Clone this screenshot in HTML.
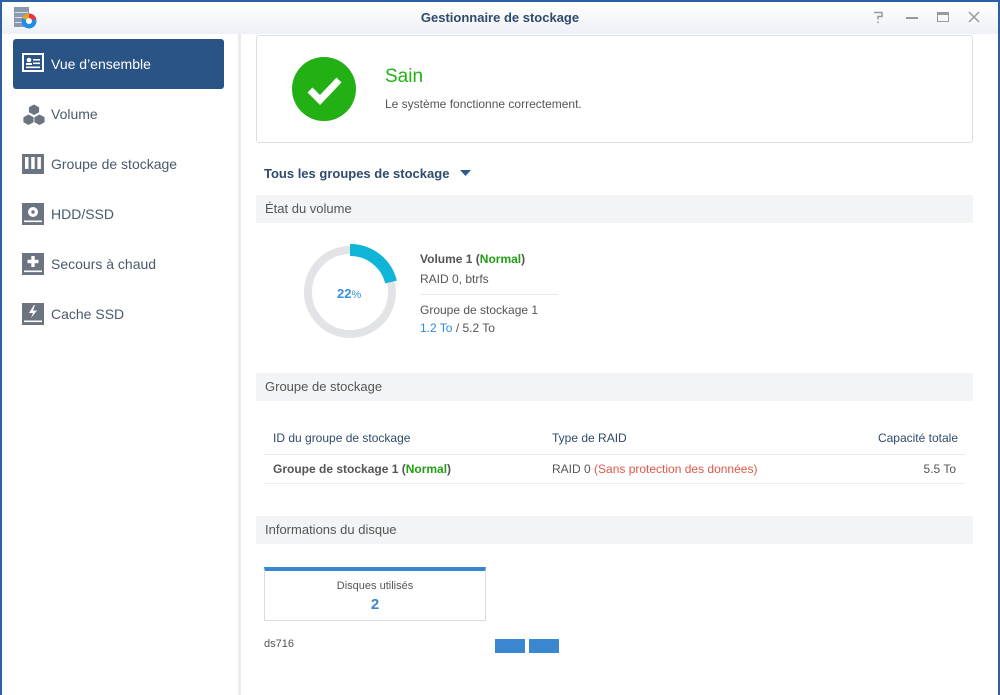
<!DOCTYPE html>
<html><head><meta charset="utf-8"><style>
*{margin:0;padding:0;box-sizing:border-box}
body{width:1000px;height:695px;overflow:hidden;background:#fff;font-family:"Liberation Sans",sans-serif;color:#555;position:relative}
.win{position:absolute;left:0;top:0;width:1000px;height:695px;border-left:2px solid #2d5fa8;border-right:2px solid #2d5fa8;border-top:2px solid #2d5fa8;}
.title{position:absolute;left:2px;top:2px;width:996px;height:32px;background:linear-gradient(#fff,#eef1f5);text-align:center;font-size:13px;font-weight:bold;color:#2e4b6e;line-height:32px}
.side{position:absolute;left:2px;top:34px;width:236px;height:661px;background:#fff}
.vline{position:absolute;left:238px;top:34px;width:3px;height:661px;background:#ebebeb}
.item{position:absolute;left:13px;width:211px;height:50px;font-size:14px;color:#4a5a6b;line-height:50px;padding-left:38px}
.item.sel{background:#2b5486;color:#fff;border-radius:3px}
.item svg{position:absolute;left:9px;top:14px}
.box{position:absolute;left:256px;top:35px;width:717px;height:108px;border:1px solid #d8dee6;border-radius:3px}
.sec{position:absolute;left:256px;width:717px;height:28px;background:#f2f4f6;font-size:13px;color:#555;line-height:28px;padding-left:9px}
.t{position:absolute;font-size:12px;white-space:nowrap}
</style></head><body>
<div class="win"></div>
<div class="title">Gestionnaire de stockage</div>
<svg style="position:absolute;left:14px;top:7px" width="23" height="22" viewBox="0 0 23 22"><rect x="0" y="0" width="15" height="20" fill="#8a9aae"/><rect x="1" y="5" width="13" height="1" fill="#dde"/><rect x="1" y="10" width="13" height="1" fill="#dde"/><rect x="1" y="15" width="13" height="1" fill="#dde"/><circle cx="15" cy="14" r="7.5" fill="#1e8ee8"/><path d="M15 14 L15 6.5 A7.5 7.5 0 0 1 22.3 12 Z" fill="#e33"/><path d="M15 14 L8 11 A7.5 7.5 0 0 1 15 6.5Z" fill="#f0a020"/><circle cx="15" cy="14" r="3" fill="#fff"/></svg>
<svg style="position:absolute;left:873px;top:11px" width="12" height="13"><path d="M1 1.5h8v4H5v3" fill="none" stroke="#999" stroke-width="1.5"/><rect x="4.2" y="10.5" width="1.6" height="1.6" fill="#999"/></svg>
<div style="position:absolute;left:906px;top:17px;width:12px;height:1.5px;background:#999"></div>
<div style="position:absolute;left:937px;top:12px;width:12px;height:10px;border:1.5px solid #999;border-top-width:3px"></div>
<svg style="position:absolute;left:968px;top:11px" width="12" height="12"><path d="M1 1l10 10M11 1L1 11" stroke="#999" stroke-width="1.5"/></svg>
<div class="side"></div>
<div class="vline"></div>
<div class="item sel" style="top:39px"><svg width="22" height="20"><rect x="1" y="1" width="20" height="17" fill="none" stroke="#fff" stroke-width="2"/><circle cx="7" cy="7" r="2.3" fill="#fff"/><rect x="4" y="10" width="6" height="2" fill="#fff"/><rect x="11" y="6" width="7" height="1.6" fill="#fff"/><rect x="11" y="9.5" width="7" height="1.6" fill="#fff"/><rect x="4" y="13.5" width="14" height="1.6" fill="#fff"/></svg>Vue d’ensemble</div>
<div class="item" style="top:89px"><svg width="24" height="24"><path d="M12 1l5.5 3v5.5L12 12.5 6.5 9.5V4z M6.5 11l5.5 3v5.5L6.5 22.5 1 19.5V14z M17.5 11l5.5 3v5.5l-5.5 3-5.5-3V14z" fill="#6b7480" stroke="#fff" stroke-width=".8"/></svg>Volume</div>
<div class="item" style="top:139px"><svg width="22" height="22"><rect x="0" y="1" width="22" height="20" fill="#6b7480"/><rect x="3" y="4" width="3.5" height="12" fill="#fff"/><rect x="9.2" y="4" width="3.5" height="12" fill="#fff"/><rect x="15.4" y="4" width="3.5" height="12" fill="#fff"/></svg>Groupe de stockage</div>
<div class="item" style="top:189px"><svg width="22" height="22"><rect x="0" y="0" width="22" height="22" fill="#6b7480"/><circle cx="11" cy="9" r="5" fill="#fff"/><circle cx="11" cy="9" r="1.7" fill="#6b7480"/><rect x="2" y="17.5" width="18" height="1.6" fill="#fff"/></svg>HDD/SSD</div>
<div class="item" style="top:239px"><svg width="22" height="22"><rect x="0" y="0" width="22" height="22" fill="#6b7480"/><rect x="9.3" y="3" width="3.4" height="11" fill="#fff"/><rect x="5.5" y="6.8" width="11" height="3.4" fill="#fff"/><rect x="2" y="17.5" width="18" height="1.6" fill="#fff"/></svg>Secours à chaud</div>
<div class="item" style="top:289px"><svg width="22" height="22"><rect x="0" y="0" width="22" height="22" fill="#6b7480"/><path d="M12 2L7 10h4l-2 5 6-7.5h-4l2-5.5z" fill="#fff"/><rect x="2" y="17.5" width="18" height="1.6" fill="#fff"/></svg>Cache SSD</div>

<div class="box"></div>
<svg style="position:absolute;left:292px;top:57px" width="64" height="64"><circle cx="32" cy="32" r="32" fill="#22b014"/><path d="M18 33l10 10 19-20" fill="none" stroke="#fff" stroke-width="7"/></svg>
<div class="t" style="left:385px;top:66px;font-size:19px;color:#22b014">Sain</div>
<div class="t" style="left:385px;top:97px;font-size:12px;color:#555">Le système fonctionne correctement.</div>
<div class="t" style="left:264px;top:166px;font-size:13px;font-weight:bold;color:#2e4b6e">Tous les groupes de stockage</div>
<svg style="position:absolute;left:460px;top:170px" width="12" height="7"><path d="M0 0h11L5.5 6z" fill="#2e5a8c"/></svg>

<div class="sec" style="top:195px">État du volume</div>
<svg style="position:absolute;left:302px;top:244px" width="96" height="96"><circle cx="48" cy="48" r="42" fill="none" stroke="#e1e3e6" stroke-width="8"/><path d="M48 6 A42 42 0 0 1 89 38" fill="none" stroke="#0fb4d6" stroke-width="12"/></svg>
<div class="t" style="left:337px;top:286px;font-size:13px;font-weight:bold;color:#3a8edc">22<span style="font-size:11px;font-weight:normal">%</span></div>
<div class="t" style="left:420px;top:252px;font-weight:bold;color:#555">Volume 1 (<span style="color:#22a014">Normal</span>)</div>
<div class="t" style="left:420px;top:272px;color:#555">RAID 0, btrfs</div>
<div style="position:absolute;left:420px;top:294px;width:138px;height:1px;background:#e6e8ea"></div>
<div class="t" style="left:420px;top:303px;color:#555">Groupe de stockage 1</div>
<div class="t" style="left:420px;top:321px;color:#555"><span style="color:#2a8ee0">1.2 To</span> / 5.2 To</div>

<div class="sec" style="top:373px">Groupe de stockage</div>
<div class="t" style="left:273px;top:431px;color:#2e4b6e">ID du groupe de stockage</div>
<div class="t" style="left:552px;top:431px;color:#2e4b6e">Type de RAID</div>
<div class="t" style="right:42px;top:431px;color:#2e4b6e">Capacité totale</div>
<div style="position:absolute;left:264px;top:454px;width:701px;height:1px;background:#e6e8ea"></div>
<div class="t" style="left:273px;top:462px;font-weight:bold;color:#555">Groupe de stockage 1 (<span style="color:#22a014">Normal</span>)</div>
<div class="t" style="left:552px;top:462px;color:#555">RAID 0 <span style="color:#e0584a">(Sans protection des données)</span></div>
<div class="t" style="right:44px;top:462px;color:#555">5.5 To</div>
<div style="position:absolute;left:264px;top:483px;width:701px;height:1px;background:#eceef0"></div>

<div class="sec" style="top:516px">Informations du disque</div>
<div style="position:absolute;left:264px;top:567px;width:222px;height:54px;border:1px solid #d6dde6;border-top:4px solid #3a86d0"></div>
<div class="t" style="left:264px;width:222px;text-align:center;top:580px;font-size:11px;color:#555">Disques utilisés</div>
<div class="t" style="left:264px;width:222px;text-align:center;top:596px;font-size:15px;font-weight:bold;color:#3a86d0">2</div>
<div class="t" style="left:264px;top:638px;font-size:11px;color:#555">ds716</div>
<div style="position:absolute;left:495px;top:639px;width:30px;height:14px;background:#3a86d0"></div>
<div style="position:absolute;left:529px;top:639px;width:30px;height:14px;background:#3a86d0"></div>
</body></html>
